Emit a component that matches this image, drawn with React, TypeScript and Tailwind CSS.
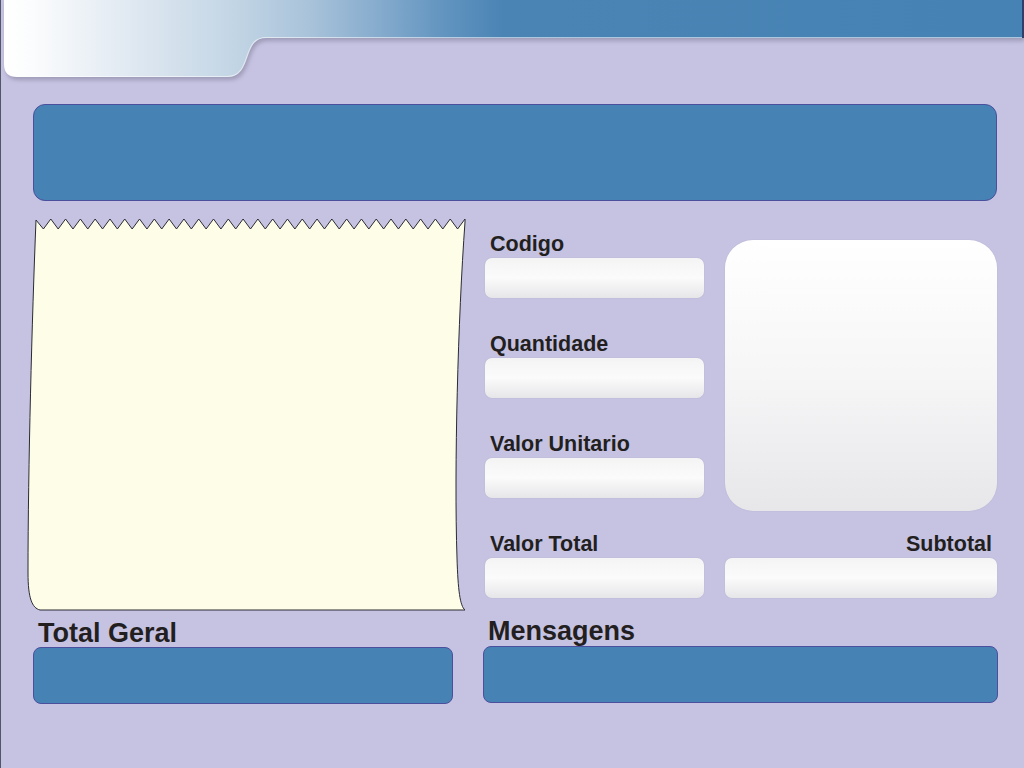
import React from "react";

function Header() {
  const tab =
    "M 3 0 H 1022 V 38 H 265 C 240 38 252 77 226 77 H 16 Q 3 77 3 64 Z";
  return (
    <svg width="1024" height="84" viewBox="0 0 1024 84" className="block">
      <defs>
        <linearGradient id="hg" x1="0" y1="0" x2="1024" y2="0" gradientUnits="userSpaceOnUse">
          <stop offset="0" stopColor="#ffffff" />
          <stop offset="0.03" stopColor="#fbfcfd" />
          <stop offset="0.13" stopColor="#dfe8f1" />
          <stop offset="0.22" stopColor="#c5d7e6" />
          <stop offset="0.3" stopColor="#a9c3da" />
          <stop offset="0.37" stopColor="#85abcd" />
          <stop offset="0.43" stopColor="#6395c0" />
          <stop offset="0.49" stopColor="#4a84b5" />
          <stop offset="1" stopColor="#4682b4" />
        </linearGradient>
        <filter id="sh" x="-5%" y="-20%" width="110%" height="150%">
          <feGaussianBlur stdDeviation="2" />
        </filter>
      </defs>
      <path d={tab} transform="translate(2,3)" fill="#8d8aa6" opacity="0.7" filter="url(#sh)" />
      <path d={tab} fill="url(#hg)" />
      <path
        d="M 1022 37.5 H 265 C 240 37.5 252 76.5 226 76.5 H 16"
        fill="none"
        stroke="#ffffff"
        strokeOpacity="0.55"
        strokeWidth="1.2"
      />
      <rect x="1021" y="0" width="2" height="38" fill="#2f3f6a" />
    </svg>
  );
}

function Paper() {
  const w = 440;
  const h = 394;
  const left = 9;
  const right = 438;
  const teeth = 29;
  const period = (right - left) / teeth;
  let zig = `M ${left} 2`;
  for (let i = 0; i < teeth; i++) {
    const x0 = left + i * period;
    zig += ` L ${(x0 + period / 2).toFixed(2)} 11 L ${(x0 + period).toFixed(2)} 1`;
  }
  const d =
    zig +
    ` L ${right} 4 C 431 100 427 250 430 340 C 431 372 433 388 438 392` +
    ` L 13 392 C 5 390 1 380 1 355 C 1 250 5 100 ${left} 2 Z`;
  return (
    <svg width={w} height={h} viewBox={`0 0 ${w} ${h}`} className="block">
      <path d={d} fill="#fefde8" stroke="#2b2b33" strokeWidth="1" strokeLinejoin="miter" />
    </svg>
  );
}

function Field({ label, className = "" }: { label: string; className?: string }) {
  return (
    <div className={"flex flex-col " + className}>
      <div className="h-[24px] text-[21.5px] leading-[24px] font-bold text-[#231f20] pl-[5px]">
        {label}
      </div>
      <div className="mt-[2px] h-[40px] w-[219px] rounded-[7px] bg-gradient-to-b from-[#f4f4f5] via-[#fbfbfb] to-[#e6e6e9] shadow-[0_0_1px_rgba(90,90,120,0.35)]" />
    </div>
  );
}

export default function App() {
  return (
    <div
      className="relative w-[1024px] h-[768px] overflow-hidden bg-[#c6c3e2] border-l border-[#55556a]"
      style={{ fontFamily: '"Liberation Sans", Arial, sans-serif' }}
    >
      <Header />
      <div className="ml-[32px] mt-[20px] w-[964px] h-[97px] rounded-[12px] bg-[#4682b4] border border-[#4b4f9e]" />
      <div className="flex mt-[17px]">
        <div className="ml-[26px] w-[440px] flex flex-col">
          <Paper />
          <div className="mt-[6px] ml-[11px] h-[30px] text-[27px] leading-[30px] font-bold text-[#231f20]">
            Total Geral
          </div>
          <div className="mt-[-1px] ml-[6px] w-[420px] h-[57px] rounded-[8px] bg-[#4682b4] border border-[#4b4f9e]" />
        </div>
        <div className="ml-[18px] w-[512px] flex flex-col mt-[14px]">
          <div className="flex gap-[21px]">
            <div className="flex flex-col gap-[34px]">
              <Field label="Codigo" />
              <Field label="Quantidade" />
              <Field label="Valor Unitario" />
            </div>
            <div className="mt-[8px] w-[272px] h-[271px] rounded-[28px] bg-gradient-to-b from-[#ffffff] via-[#f6f6f7] to-[#e7e7ea] shadow-[0_0_1px_rgba(90,90,120,0.3)]" />
          </div>
          <div className="flex gap-[21px] mt-[21px]">
            <Field label="Valor Total" />
            <div className="flex flex-col w-[272px]">
              <div className="h-[24px] text-[21.5px] leading-[24px] font-bold text-[#231f20] text-right pr-[5px]">
                Subtotal
              </div>
              <div className="mt-[2px] h-[40px] w-[272px] rounded-[7px] bg-gradient-to-b from-[#f4f4f5] via-[#fbfbfb] to-[#e6e6e9] shadow-[0_0_1px_rgba(90,90,120,0.35)]" />
            </div>
          </div>
          <div className="mt-[18px] ml-[3px] h-[30px] text-[27px] leading-[30px] font-bold text-[#231f20]">
            Mensagens
          </div>
          <div className="ml-[-2px] w-[515px] h-[57px] rounded-[8px] bg-[#4682b4] border border-[#4b4f9e]" />
        </div>
      </div>
    </div>
  );
}
